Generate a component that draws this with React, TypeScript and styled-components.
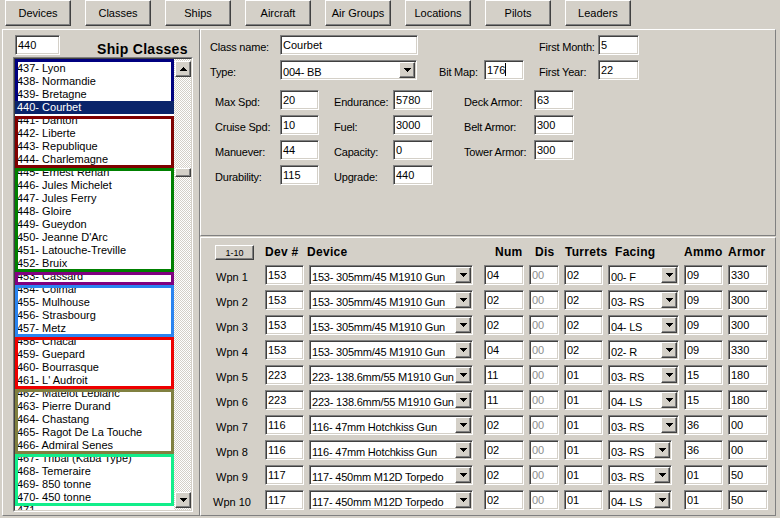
import React from "react";
import styled, { createGlobalStyle, css } from "styled-components";

const face = "#d4d0c8";

const GlobalStyle = createGlobalStyle`
  html, body {
    margin: 0;
    padding: 0;
    background: ${face};
  }
  body {
    font-family: "Liberation Sans", Arial, sans-serif;
    font-size: 11px;
    color: #000;
  }
  * {
    box-sizing: border-box;
  }
`;

const raised = css`
  border: 1px solid;
  border-color: #fff #404040 #404040 #fff;
  box-shadow: inset -1px -1px #808080, inset 1px 1px ${face};
`;

const sunken = css`
  border: 1px solid;
  border-color: #808080 #fff #fff #808080;
  box-shadow: inset 1px 1px #404040, inset -1px -1px ${face};
`;

const panel = css`
  border: 1px solid;
  border-color: #fff #808080 #808080 #fff;
`;

const groups = [
  { color: "#000080", items: ["437- Lyon", "438- Normandie", "439- Bretagne", "440- Courbet"] },
  { color: "#800000", items: ["441- Danton", "442- Liberte", "443- Republique", "444- Charlemagne"] },
  {
    color: "#008000",
    items: [
      "445- Ernest Renan",
      "446- Jules Michelet",
      "447- Jules Ferry",
      "448- Gloire",
      "449- Gueydon",
      "450- Jeanne D'Arc",
      "451- Latouche-Treville",
      "452- Bruix",
    ],
  },
  { color: "#800080", items: ["453- Cassard"] },
  { color: "#2a84f0", items: ["454- Colmar", "455- Mulhouse", "456- Strasbourg", "457- Metz"] },
  { color: "#ee0000", items: ["458- Chacal", "459- Guepard", "460- Bourrasque", "461- L' Audroit"] },
  {
    color: "#808040",
    items: [
      "462- Matelot Leblanc",
      "463- Pierre Durand",
      "464- Chastang",
      "465- Ragot De La Touche",
      "466- Admiral Senes",
    ],
  },
  {
    color: "#12ee8a",
    items: ["467- Tribal (Kaba Type)", "468- Temeraire", "469- 850 tonne", "470- 450 tonne"],
  },
];

const gun = "153- 305mm/45 M1910 Gun";
const sec = "223- 138.6mm/55 M1910 Gun";
const hot = "116- 47mm Hotchkiss Gun";
const torp = "117- 450mm M12D Torpedo";

const weapons = [
  { dev: "153", device: gun, num: "04", tur: "02", facing: "00- F", ammo: "09", armor: "330" },
  { dev: "153", device: gun, num: "02", tur: "02", facing: "03- RS", ammo: "09", armor: "300" },
  { dev: "153", device: gun, num: "02", tur: "02", facing: "04- LS", ammo: "09", armor: "300" },
  { dev: "153", device: gun, num: "04", tur: "02", facing: "02- R", ammo: "09", armor: "330" },
  { dev: "223", device: sec, num: "11", tur: "01", facing: "03- RS", ammo: "15", armor: "180" },
  { dev: "223", device: sec, num: "11", tur: "01", facing: "04- LS", ammo: "15", armor: "180" },
  { dev: "116", device: hot, num: "02", tur: "01", facing: "03- RS", ammo: "36", armor: "00" },
  { dev: "116", device: hot, num: "02", tur: "01", facing: "03- RS", ammo: "36", armor: "00" },
  { dev: "117", device: torp, num: "02", tur: "01", facing: "03- RS", ammo: "01", armor: "50" },
  { dev: "117", device: torp, num: "02", tur: "01", facing: "04- LS", ammo: "01", armor: "50" },
];

const toolbar = ["Devices", "Classes", "Ships", "Aircraft", "Air Groups", "Locations", "Pilots", "Leaders"];

const Window = styled.div`
  width: 780px;
  height: 518px;
  overflow: hidden;
  display: flex;
  flex-direction: column;
  background: ${face};
`;

const Toolbar = styled.div`
  height: 29px;
  flex-shrink: 0;
  display: flex;
  gap: 14px;
  padding-left: 5px;
`;

const ToolButton = styled.button`
  ${raised};
  width: 66px;
  height: 26px;
  padding: 0;
  background: ${face};
  font: inherit;
  color: #000;
`;

const Main = styled.div`
  flex: 1;
  display: flex;
  padding: 0 4px 2px 2px;
  min-height: 0;
`;

const LeftPanel = styled.div`
  ${panel};
  width: 198px;
  flex-shrink: 0;
  display: flex;
  flex-direction: column;
  padding: 5px 0 0 10px;
`;

const LeftHeader = styled.div`
  display: flex;
  height: 20px;
  margin-left: 2px;
`;

const Title = styled.div`
  margin-left: 37px;
  align-self: flex-end;
  margin-bottom: -1px;
  font-size: 14px;
  font-weight: bold;
  letter-spacing: 0.3px;
  line-height: 14px;
  white-space: nowrap;
`;

const ListBox = styled.div`
  margin-top: 2px;
  width: 180px;
  height: 455px;
  border: 1px solid;
  border-color: #808080 #fff #fff #808080;
`;

const ListInner = styled.div`
  height: 100%;
  display: flex;
  border: 1px solid;
  border-color: #404040 ${face} ${face} #404040;
`;

const Items = styled.div`
  flex: 1;
  background: #fff;
  overflow: hidden;
  padding-top: 3px;
`;

const Group = styled.div<{ $color: string; $first?: boolean }>`
  position: relative;

  &::after {
    content: "";
    position: absolute;
    left: 0;
    right: 0;
    top: ${(p) => (p.$first ? -3 : 2)}px;
    bottom: ${(p) => (p.$first ? 0 : -2)}px;
    border: 3px solid ${(p) => p.$color};
    pointer-events: none;
  }
`;

const Item = styled.div<{ $selected?: boolean }>`
  position: relative;
  z-index: ${(p) => (p.$selected ? 1 : 0)};
  height: 13px;
  line-height: 13px;
  padding-left: 2px;
  white-space: nowrap;
  background: ${(p) => (p.$selected ? "#0a246a" : "transparent")};
  color: ${(p) => (p.$selected ? "#fff" : "#000")};
`;

const ScrollBar = styled.div`
  width: 17px;
  flex-shrink: 0;
  display: flex;
  flex-direction: column;
  align-items: flex-end;
  padding: 2px 0;
  background: repeating-conic-gradient(${face} 0% 25%, #fff 0% 50%) 0 0 / 2px 2px;
`;

const ScrollButton = styled.div`
  ${raised};
  width: 16px;
  height: 16px;
  background: ${face};
  display: flex;
  align-items: center;
  justify-content: center;
`;

const Thumb = styled.div`
  ${raised};
  width: 16px;
  height: 9px;
  margin-top: 91px;
  background: ${face};
`;

const Spacer = styled.div`
  flex: 1;
`;

const RightColumn = styled.div`
  flex: 1;
  display: flex;
  flex-direction: column;
  gap: 1px;
`;

const TopPanel = styled.div`
  ${panel};
  height: 207px;
  flex-shrink: 0;
  display: flex;
  flex-direction: column;
  padding: 5px 0 0 9px;
`;

const FormRow = styled.div<{ $top?: number; $indent?: number }>`
  display: flex;
  height: 20px;
  margin-top: ${(p) => p.$top ?? 0}px;
  padding-left: ${(p) => p.$indent ?? 0}px;
`;

const Label = styled.span<{ $w: number; $gap?: number }>`
  width: ${(p) => p.$w}px;
  margin-left: ${(p) => p.$gap ?? 0}px;
  flex-shrink: 0;
  padding-top: 4px;
  line-height: 16px;
  letter-spacing: -0.2px;
  white-space: nowrap;
`;

const TextBox = styled.div<{ $w?: number; $dim?: boolean }>`
  ${sunken};
  width: ${(p) => (p.$w ? `${p.$w}px` : "100%")};
  height: 20px;
  flex-shrink: 0;
  background: #fff;
  padding: 2px 0 0 2px;
  line-height: 14px;
  white-space: nowrap;
  overflow: hidden;
  color: ${(p) => (p.$dim ? "#8c8c8c" : "#000")};
`;

const Caret = styled.span`
  display: inline-block;
  width: 1px;
  height: 13px;
  background: #000;
  vertical-align: top;
`;

const SelectBox = styled.div<{ $w: number }>`
  ${sunken};
  width: ${(p) => p.$w}px;
  height: 20px;
  flex-shrink: 0;
  background: #fff;
  padding: 1px;
  display: flex;
`;

const SelectText = styled.span`
  flex: 1;
  min-width: 0;
  padding: 4px 0 0 1px;
  line-height: 13px;
  letter-spacing: -0.2px;
  white-space: nowrap;
  overflow: hidden;
`;

const DropButton = styled.span`
  ${raised};
  width: 16px;
  height: 16px;
  flex-shrink: 0;
  background: ${face};
  display: flex;
  align-items: center;
  justify-content: center;
`;

const BottomPanel = styled.div`
  ${panel};
  flex: 1;
  padding: 7px 0 0 7px;
`;

const WeaponGrid = styled.div`
  display: grid;
  grid-template-columns: 52px 39px 170px 40px 30px 39px 71px 39px 40px;
  grid-template-rows: 15px;
  grid-auto-rows: 20px;
  column-gap: 5px;
  row-gap: 5px;
`;

const PageButton = styled.button`
  ${raised};
  width: 39px;
  height: 15px;
  margin-left: 7px;
  padding: 0;
  background: ${face};
  font-family: inherit;
  font-size: 9px;
  line-height: 12px;
  color: #000;
`;

const ColHead = styled.div<{ $off?: number }>`
  margin-left: ${(p) => p.$off ?? 0}px;
  font-size: 12px;
  font-weight: bold;
  letter-spacing: 0.3px;
  line-height: 15px;
  white-space: nowrap;
`;

const RowLabel = styled.div`
  text-align: center;
  padding: 4px 4px 0 0;
  line-height: 16px;
  white-space: nowrap;
`;

const Arrow = ({ up }: { up?: boolean }) => (
  <svg width="7" height="4" viewBox="0 0 7 4" shapeRendering="crispEdges">
    <path
      d={up ? "M3 0h1v1h1v1h1v1h1v1H0V3h1V2h1V1h1z" : "M0 0h7v1H6v1H5v1H4v1H3V3H2V2H1V1H0z"}
      fill="#000"
    />
  </svg>
);

const Select = ({ w, value }: { w: number; value: string }) => (
  <SelectBox $w={w}>
    <SelectText>{value}</SelectText>
    <DropButton>
      <Arrow />
    </DropButton>
  </SelectBox>
);

const statRows = [
  ["Max Spd:", "20", "Endurance:", "5780", "Deck Armor:", "63"],
  ["Cruise Spd:", "10", "Fuel:", "3000", "Belt Armor:", "300"],
  ["Manuever:", "44", "Capacity:", "0", "Tower Armor:", "300"],
  ["Durability:", "115", "Upgrade:", "440", "", ""],
];

export default function App() {
  return (
    <Window>
      <GlobalStyle />
      <Toolbar>
        {toolbar.map((t) => (
          <ToolButton key={t}>{t}</ToolButton>
        ))}
      </Toolbar>
      <Main>
        <LeftPanel>
          <LeftHeader>
            <TextBox $w={45}>440</TextBox>
            <Title>Ship Classes</Title>
          </LeftHeader>
          <ListBox>
            <ListInner>
              <Items>
                {groups.map((g, gi) => (
                  <Group key={g.color} $color={g.color} $first={gi === 0}>
                    {g.items.map((it) => (
                      <Item key={it} $selected={it === "440- Courbet"}>
                        {it}
                      </Item>
                    ))}
                  </Group>
                ))}
                <Item>471-</Item>
              </Items>
              <ScrollBar>
                <ScrollButton>
                  <Arrow up />
                </ScrollButton>
                <Thumb />
                <Spacer />
                <ScrollButton>
                  <Arrow />
                </ScrollButton>
              </ScrollBar>
            </ListInner>
          </ListBox>
        </LeftPanel>

        <RightColumn>
          <TopPanel>
            <FormRow>
              <Label $w={70}>Class name:</Label>
              <TextBox $w={138}>Courbet</TextBox>
              <Label $w={59} $gap={121}>
                First Month:
              </Label>
              <TextBox $w={41}>5</TextBox>
            </FormRow>
            <FormRow $top={5}>
              <Label $w={70}>Type:</Label>
              <Select w={137} value="004- BB" />
              <Label $w={45} $gap={22}>
                Bit Map:
              </Label>
              <TextBox $w={40}>
                176
                <Caret />
              </TextBox>
              <Label $w={59} $gap={15}>
                First Year:
              </Label>
              <TextBox $w={41}>22</TextBox>
            </FormRow>
            {statRows.map((r, i) => (
              <FormRow key={r[0]} $top={i === 0 ? 10 : 5} $indent={5}>
                <Label $w={65}>{r[0]}</Label>
                <TextBox $w={39}>{r[1]}</TextBox>
                <Label $w={59} $gap={15}>
                  {r[2]}
                </Label>
                <TextBox $w={40}>{r[3]}</TextBox>
                {r[4] && (
                  <>
                    <Label $w={70} $gap={31}>
                      {r[4]}
                    </Label>
                    <TextBox $w={40}>{r[5]}</TextBox>
                  </>
                )}
              </FormRow>
            ))}
          </TopPanel>

          <BottomPanel>
            <WeaponGrid>
              <div>
                <PageButton>1-10</PageButton>
              </div>
              <ColHead>Dev #</ColHead>
              <ColHead $off={-2}>Device</ColHead>
              <ColHead $off={11}>Num</ColHead>
              <ColHead $off={6}>Dis</ColHead>
              <ColHead $off={1}>Turrets</ColHead>
              <ColHead $off={7}>Facing</ColHead>
              <ColHead>Ammo</ColHead>
              <ColHead>Armor</ColHead>

              {weapons.map((w, i) => (
                <React.Fragment key={i}>
                  <RowLabel>Wpn {i + 1}</RowLabel>
                  <TextBox>{w.dev}</TextBox>
                  <Select w={164} value={w.device} />
                  <TextBox>{w.num}</TextBox>
                  <TextBox $dim>00</TextBox>
                  <TextBox>{w.tur}</TextBox>
                  <Select w={i >= 7 ? 64 : 71} value={w.facing} />
                  <TextBox>{w.ammo}</TextBox>
                  <TextBox>{w.armor}</TextBox>
                </React.Fragment>
              ))}
            </WeaponGrid>
          </BottomPanel>
        </RightColumn>
      </Main>
    </Window>
  );
}
